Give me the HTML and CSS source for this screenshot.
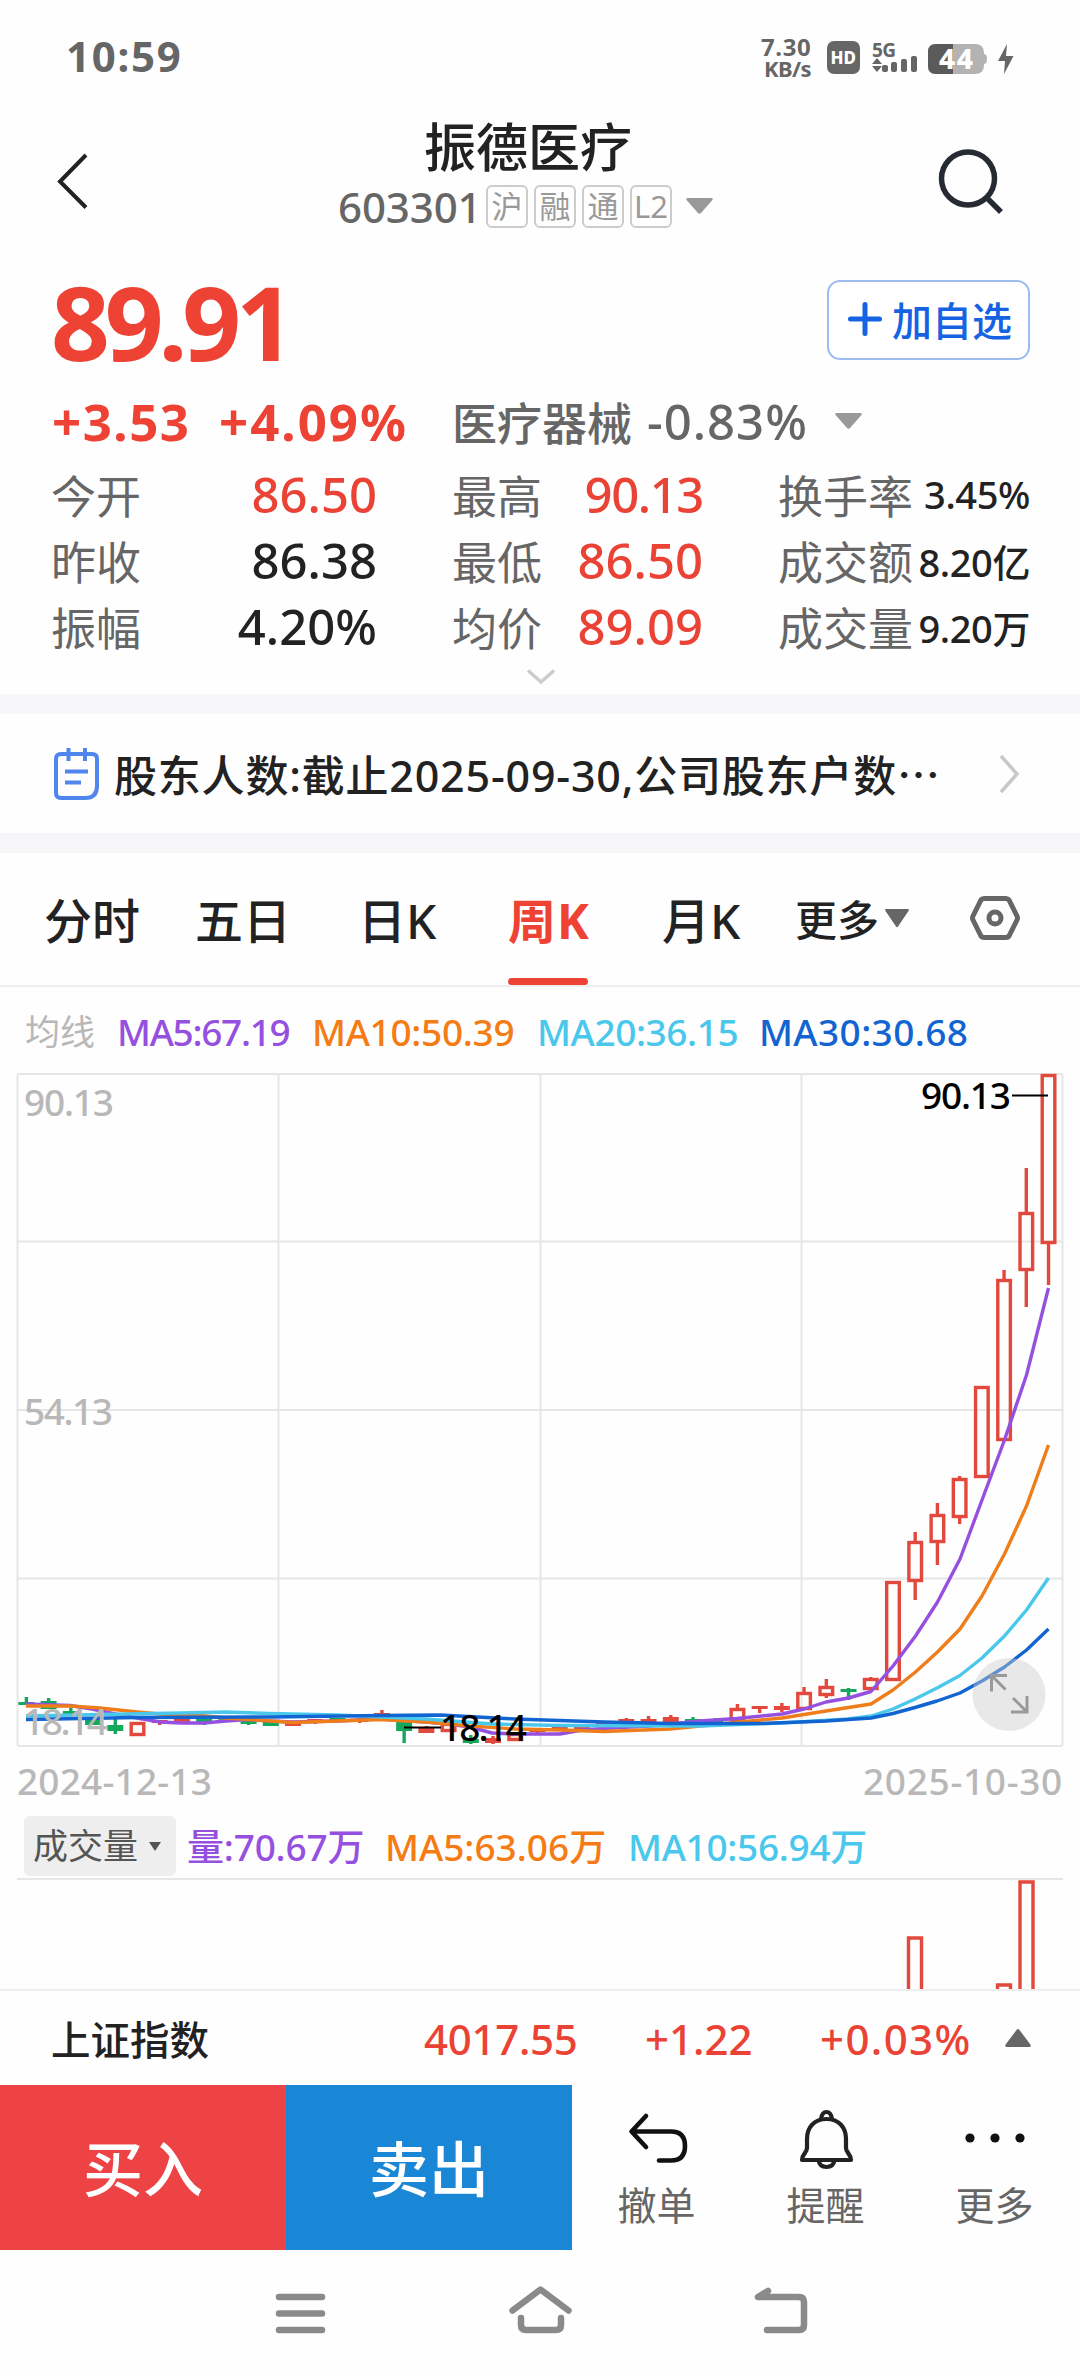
FILE: index.html
```html
<!DOCTYPE html>
<html lang="zh-CN">
<head>
<meta charset="utf-8">
<title>振德医疗 603301</title>
<link rel="stylesheet" href="styles.css">
</head>
<body>
<div class="screen">
  <div class="status">
    <span class="clock">10:59</span>
    <div class="speed"><span>7.30</span><span class="unit">KB/s</span></div>
    <svg class="status-icons" width="200" height="50" viewBox="820 34 200 50">
      <rect x="827" y="41" width="33" height="33" rx="7" fill="#666"/>
      <text class="hd" x="830.5" y="64">HD</text>
      <text class="fiveg" x="872" y="56.500" textLength="24">5G</text>
      <g fill="#666"><path d="M872 64l5-6 5 6zM872 66l5 6 5-6z"/><rect x="882" y="65" width="6" height="7" rx="2"/><rect x="891" y="62" width="6" height="10" rx="2"/><rect x="901" y="59" width="6" height="13" rx="2"/><rect x="911" y="56" width="6" height="16" rx="2"/></g>
      <path d="M936 44h39q9 0 9 9v1q3 0 3 5t-3 5v1q0 9-9 9h-39q-8 0-8-8v-14q0-8 8-8z" fill="#b3b3b3"/>
      <path d="M936 44h17v30h-17q-8 0-8-8v-14q0-8 8-8z" fill="#5a5a5a"/>
      <text class="batt" x="939" y="69" textLength="34">44</text>
      <path d="M1007 44l-9 17h7l-1 13 9.500-18h-7.500z" fill="#666"/>
    </svg>
  </div>

  <header class="header">
    <svg class="back" width="40" height="60" viewBox="0 0 40 60"><path d="M34 4L8 30.500l26 26" fill="none" stroke="#222" stroke-width="4"/></svg>
    <div class="heading">
      <h1>振德医疗</h1>
      <div class="code-row">
        <span class="code">603301</span>
        <span class="tag">沪</span><span class="tag">融</span><span class="tag">通</span><span class="tag">L2</span>
        <svg class="code-arrow" width="27" height="16"><path d="M2 0h23q3 0 1 2.500L15 15q-1.500 1.500-3 0L1 2.500Q-1 0 2 0z" fill="#999"/></svg>
      </div>
    </div>
    <svg class="search" width="70" height="70" viewBox="935 145 70 70"><circle cx="968" cy="178.500" r="26.500" fill="none" stroke="#262a33" stroke-width="5.500"/><path d="M987 198l14 14" stroke="#262a33" stroke-width="5.500"/></svg>
  </header>

  <section class="quote">
    <div class="price-row">
      <span class="price">89.91</span>
      <button class="add"><svg width="34" height="34"><path d="M17 2.500v29M2.500 17h29" stroke="#1562e2" stroke-width="5" stroke-linecap="round"/></svg><span>加自选</span></button>
    </div>
    <div class="change-row">
      <span class="chg">+3.53</span><span class="pct">+4.09%</span><span class="sector">医疗器械</span><span class="sector-pct">-0.83%</span>
      <svg class="sector-arrow" width="27" height="16"><path d="M2 0h23q3 0 1 2.500L15 15q-1.500 1.500-3 0L1 2.500Q-1 0 2 0z" fill="#999"/></svg>
    </div>
    <div class="stats">
      <div class="stat"><span>今开</span><b class="up">86.50</b></div>
      <div class="stat"><span>最高</span><b class="up one">90.13</b></div>
      <div class="stat small"><span>换手率</span><b>3.45%</b></div>
      <div class="stat"><span>昨收</span><b>86.38</b></div>
      <div class="stat"><span>最低</span><b class="up">86.50</b></div>
      <div class="stat small"><span>成交额</span><b>8.20亿</b></div>
      <div class="stat"><span>振幅</span><b>4.20%</b></div>
      <div class="stat"><span>均价</span><b class="up">89.09</b></div>
      <div class="stat small"><span>成交量</span><b>9.20万</b></div>
    </div>
    <svg class="expand" width="30" height="18"><path d="M2 2.500L15 14 28 2.500" fill="none" stroke="#ccc" stroke-width="3.500"/></svg>
  </section>

  <section class="news">
    <svg width="48" height="54" viewBox="52 746 48 54"><g fill="none" stroke="#4f86ee" stroke-width="4"><path d="M61 753h31q5 0 5 5v27q0 12-12 12H61q-5 0-5-5v-34q0-5 5-5z"/><path d="M68.500 747v13M85 747v13"/><path d="M65 770.500h23M65 781.500h16"/></g></svg>
    <span class="news-text">股东人数:截止2025-09-30,公司股东户数⋯</span>
    <svg width="24" height="42"><path d="M3 3l16 18L3 39" fill="none" stroke="#c8c8c8" stroke-width="3.500"/></svg>
  </section>

  <nav class="tabs">
    <span>分时</span><span>五日</span><span>日K</span><span class="active">周K</span><span>月K</span>
    <span class="more">更多<svg width="24" height="19"><path d="M1 0h22q1.500 0 .5 2L13 17.500q-1 1.500-2 0L.5 2Q-.5 0 1 0z" fill="#666"/></svg></span>
    <svg class="gear" width="52" height="48" viewBox="967 894 52 48"><path d="M982 898.500h22q2 0 3 1.500l8 16q1 2 0 4l-8 16q-1 1.500-3 1.500h-22q-2 0-3-1.500l-8-16q-1-2 0-4l8-16q1-1.500 3-1.500z" fill="none" stroke="#666" stroke-width="5"/><circle cx="993" cy="918" r="6" fill="none" stroke="#666" stroke-width="5"/></svg>
  </nav>

  <div class="legend">
    <span class="name">均线</span><span class="violet">MA5:67.19</span><span class="orange">MA10:50.39</span><span class="cyan">MA20:36.15</span><span class="blue">MA30:30.68</span>
  </div>

  <svg class="chart" width="1080" height="676" viewBox="0 1073 1080 676">
    <g fill="none" stroke="#e6e6e6" stroke-width="2">
      <rect x="17.500" y="1074" width="1045" height="672" rx="2"/>
      <path d="M278.500 1074v672M540.500 1074v672M801.500 1074v672M18 1241.500h1044M18 1410h1044M18 1578.500h1044"/>
    </g>
    <g id="candles"></g>
    <g fill="none" stroke-width="3.400" stroke-linejoin="round">
      <polyline stroke="#9650e0" points="26,1704 70,1705.500 92,1709 115,1714 137,1718 160,1722 181,1723 204,1723 226,1721 248,1719.500 270,1721 293,1722 337,1721 380,1719 426,1722 448,1724 470,1727 492,1733 515,1734 560,1734 582,1730 610,1728 650,1726 700,1721 737,1718.500 782,1714 804,1709 826,1702 848.500,1698 871,1691.500 893,1666 915.500,1636 937.500,1602 960,1559 982,1500 1004.500,1440 1026.500,1375 1048.500,1288"/>
      <polyline stroke="#ee7d1a" points="26,1706 70,1706 100,1708 137,1712 160,1714 200,1715.500 226,1718 270,1721 293,1722.500 337,1721 380,1719.500 426,1722 470,1726 515,1729 560,1730 604,1731.500 670,1729 720,1724 740,1722 782,1718 826,1711 871,1704 893,1690 915.500,1672 937.500,1652 960,1629 982,1596 1004.500,1554 1026.500,1506 1048.500,1445"/>
      <polyline stroke="#49c8ec" points="26,1716 100,1714.500 181,1713 226,1712 270,1713.500 337,1715 426,1719 492,1724 560,1725.500 700,1726 782,1723 848,1719 871,1716 893,1709 915,1699 937,1688 960,1675.500 982,1658 1004.500,1636 1026.500,1610 1048.500,1578"/>
      <polyline stroke="#1264d1" points="26,1719.500 137,1717.500 270,1717 380,1715.500 440,1715 515,1719 604,1722 670,1723.500 760,1723.500 826,1721 871,1718 893,1713.500 915,1707.500 937,1701 960,1693 982,1681 1004.500,1667 1026.500,1650 1048.500,1629"/>
    </g>
    <g class="axis"><text x="24" y="1116" textLength="90">90.13</text><text x="24" y="1425" textLength="89">54.13</text><text x="23" y="1734.500" textLength="85">18.14</text></g>
    <g class="mark"><text x="921" y="1109" textLength="90">90.13</text><text x="440" y="1741" textLength="87">18.14</text></g>
    <path d="M1012 1095.500h36M404 1727.500h37" stroke="#000" stroke-width="1.800"/>
    <circle cx="1009" cy="1694.500" r="36.500" fill="#ccc" fill-opacity=".43"/>
    <path d="M1007 1675.500h-15.500v16M991.500 1675.500l14 14M1027 1696v16h-16M1027 1712l-14-14" fill="none" stroke="#999" stroke-width="3"/>
  </svg>

  <div class="dates"><span class="start">2024-12-13</span><span class="end">2025-10-30</span></div>

  <div class="vol-legend">
    <span class="vol-btn">成交量<svg width="12" height="9"><path d="M0 0h12L6 9z" fill="#555"/></svg></span>
    <span class="violet">量:70.67万</span><span class="orange">MA5:63.06万</span><span class="cyan">MA10:56.94万</span>
  </div>
  <svg class="volume" width="1080" height="111" viewBox="0 1878 1080 111">
    <path d="M17 1879h1046" stroke="#e6e6e6" stroke-width="2"/>
    <path d="M908.500 1992v-54h13v54M997.500 1992v-7h13v7M1020 1992v-110h13v110" fill="none" stroke="#e2483b" stroke-width="3.400"/>
  </svg>

  <div class="index">
    <span class="index-name">上证指数</span><span class="index-value">4017.55</span><span>+1.22</span><span class="index-pct">+0.03%</span>
    <svg width="26" height="18"><path d="M11.500 1q1.500-2 3 0L25 15q2 3-1 3H2q-3 0-1-3z" fill="#666"/></svg>
  </div>

  <div class="trade">
    <div class="buy">买入</div><div class="sell">卖出</div>
    <div class="action">
      <svg width="64" height="64" viewBox="624 2106 64 64"><path d="M645 2116l-14.500 15.500 14.500 15.500M631 2131.500h39q14 0 14 14.500t-14 14.500h-12" fill="none" stroke="#111" stroke-width="4.600" stroke-linecap="round" stroke-linejoin="round"/></svg><span>撤单</span></div>
    <div class="action">
      <svg width="64" height="64" viewBox="792 2106 64 64"><g fill="none" stroke="#222" stroke-width="4.200" stroke-linejoin="round"><path d="M824.500 2119c-12 0-19.500 8-19.500 20v9c0 5-5 6-5 12h49c0-6-5-7-5-12v-9c0-12-7.500-20-19.500-20z"/><path d="M819 2119q1-7 5.500-7t5.500 7M816.500 2160q1 7 8 7t8-7"/></g></svg><span>提醒</span></div>
    <div class="action">
      <svg width="64" height="64" viewBox="962 2106 64 64"><g fill="#111"><circle cx="969" cy="2138" r="4.600"/><circle cx="994" cy="2138" r="4.600"/><circle cx="1019" cy="2138" r="4.600"/></g></svg><span>更多</span></div>
  </div>

  <svg class="sysnav" width="1080" height="126" viewBox="0 2250 1080 126">
    <g fill="none" stroke="#8a8a8a" stroke-width="6.500" stroke-linecap="round" stroke-linejoin="round">
      <path d="M279 2297h43M279 2313.500h43M279 2330h43"/>
      <path d="M512.500 2310.500l28-21 28 21M521 2318v7q0 5 5 5h30q5 0 5-5v-7"/>
      <path d="M768 2291l-10 6h41q5 0 5 5v23q0 5-5 5h-32"/>
    </g>
  </svg>
</div>
<script src="chart.js"></script>
</body>
</html>
```
FILE: styles.css
```css
* { box-sizing: border-box; }
body { margin: 0; background: #fdfdfd; color: #222; font-family: "Noto Sans", "Noto Sans CJK SC", sans-serif; font-weight: 500; }
svg { display: block; flex: none; }
.screen { width: 1080px; height: 2376px; display: flex; flex-direction: column; overflow: hidden; white-space: nowrap; background: #fefefe; }

.status { height: 114px; display: flex; align-items: flex-start; padding-left: 66px; color: #666; font-weight: 700; }
.clock { width: 695px; font-size: 42px; line-height: 60px; margin-top: 26px; letter-spacing: 1.7px; }
.speed { display: flex; flex-direction: column; width: 59px; padding-top: 35px; font-size: 24px; line-height: 23px; letter-spacing: .6px; }
.speed .unit { font-size: 22px; line-height: 21px; padding-left: 3px; letter-spacing: -.6px; }
.status-icons { margin-top: 34px; }
.status text { font-weight: 800; fill: #fff; }
.status .hd { font-size: 17px; }
.status .fiveg { font-size: 19px; fill: #666; font-weight: 700; }
.status .batt { font-size: 28px; }

.header { height: 151px; display: grid; grid-template-columns: 52px 286px 592px 1fr; }
.back { grid-column: 1; margin: 37px 0 0 52px; }
.heading { grid-column: 3; }
h1 { margin: 0 0 0 86px; font-size: 52px; line-height: 66px; font-weight: 500; }
.code-row { display: flex; gap: 6px; margin-top: 5px; height: 43px; align-items: center; }
.code { width: 142px; font-size: 42px; line-height: 43px; color: #666; letter-spacing: -.1px; }
.tag { width: 42px; height: 43px; border: 2px solid #ccc; border-radius: 6px; text-align: center; font-size: 31px; line-height: 39px; color: #999; font-weight: 400; }
.code-arrow { margin-left: 8px; margin-bottom: 2px; }
.search { grid-column: 4; margin: 31px 0 0 5px; }

.quote { height: 429px; padding: 0 50px 0 52px; }
.price-row { height: 124px; display: flex; justify-content: space-between; align-items: flex-start; }
.price { margin-left: -1px; font-size: 103px; line-height: 112px; font-weight: 700; color: #ed4234; letter-spacing: -5.2px; }
.add { width: 203px; height: 80px; margin-top: 15px; padding: 0 0 3px 19px; border: 2px solid #9dbcf0; border-radius: 13px; background: #fff; color: #1562e2; font: inherit; font-size: 40px; display: flex; align-items: center; gap: 10px; }
.change-row { height: 64px; display: flex; align-items: center; }
.chg { width: 167px; font-size: 51px; font-weight: 700; color: #ed4234; letter-spacing: 1.5px; }
.pct { width: 233px; font-size: 51px; font-weight: 700; color: #ed4234; letter-spacing: 2px; }
.sector { width: 195px; font-size: 45px; color: #666; font-weight: 450; }
.sector-pct { width: 188px; font-size: 49px; color: #666; letter-spacing: 1px; }
.stats { margin-top: 8px; display: grid; grid-template-columns: 325px 326px 327px; grid-auto-rows: 66px; }
.stat { display: flex; justify-content: space-between; align-items: center; font-size: 45px; }
.stat:nth-child(3n+2) { padding-left: 76px; }
.stat:nth-child(3n) { padding-left: 76px; }
.stat span { margin-left: -1px; color: #666; font-weight: 400; }
.stat b { font-size: 49px; font-weight: 500; }
.stat .one { letter-spacing: -1.4px; }
.stat.small b { font-size: 38px; letter-spacing: -.4px; }
.up { color: #ea4335; }
.expand { margin: 9px auto 0; }

.news { height: 159px; border: solid #f6f6f8; border-width: 20px 0; display: flex; align-items: center; padding: 0 50px 0 52px; }
.news-text { width: 898px; padding-left: 14px; font-size: 43px; letter-spacing: .8px; }

.tabs { height: 134px; border-bottom: 2px solid #eee; display: grid; grid-template-columns: 151px 163px 150px 154px 133px 174px 1fr; padding-left: 44px; font-size: 48px; line-height: 136px; }
.tabs .active { color: #ed4234; font-weight: 700; letter-spacing: 1px; }
.active::after { content: ""; display: block; width: 80px; height: 7px; border-radius: 4px; background: #ed4234; margin-top: -11px; }
.tabs .more { display: flex; align-items: center; gap: 6px; font-size: 42px; height: 134px; }
.more svg { margin-bottom: 4px; }
.gear { margin-top: 41px; }

.legend { height: 86px; display: grid; grid-template-columns: 92px 195px 225px 222px 1fr; padding: 4px 0 0 25px; font-size: 37px; line-height: 82px; }
.legend .name { font-size: 35px; font-weight: 400; color: #b8b8b8; }
.legend .violet { letter-spacing: -1.3px; }
.legend .orange { letter-spacing: -.3px; }
.legend .cyan { letter-spacing: -.4px; }
.legend .blue { letter-spacing: .4px; }
.violet { color: #9650e0; } .orange { color: #f57c14; } .cyan { color: #49c8ec; } .blue { color: #1264d1; }
.axis text { font-size: 37px; fill: #b8b8b8; }
.mark text { font-size: 37px; fill: #000; }

.dates { height: 64px; display: flex; justify-content: space-between; padding: 0 17px 0 17px; font-size: 37px; line-height: 64px; color: #b8b8b8; }
.start { letter-spacing: .2px; }
.end { letter-spacing: .7px; }
.vol-legend { height: 65px; padding: 3px 0 0 24px; display: grid; grid-template-columns: 163px 198px 243px 1fr; font-size: 37px; line-height: 62px; }
.vol-legend .violet { letter-spacing: -.2px; }
.vol-legend .cyan { letter-spacing: -.3px; }
.vol-btn { width: 152px; height: 60px; background: #eee; border-radius: 6px; padding-left: 9px; display: flex; align-items: center; gap: 11px; color: #555; font-size: 35px; font-weight: 400; }

.index { height: 96px; border-top: 2px solid #eee; display: grid; grid-template-columns: 373px 221px 175px 185px 1fr; align-items: center; padding-left: 51px; font-size: 42px; color: #ea4335; }
.index-name { font-size: 39.5px; color: #222; }
.index-value { letter-spacing: -.3px; }
.index-pct { letter-spacing: 1.4px; }
.trade { height: 165px; display: grid; grid-template-columns: 286px 286px 169px 169px 169px; grid-template-rows: 165px; }
.buy, .sell { color: #fff; font-size: 60px; line-height: 169px; text-align: center; overflow: hidden; }
.buy { background: #ee4345; } .sell { background: #1a86d6; }
.action { display: flex; flex-direction: column; align-items: center; padding-top: 21px; font-size: 39px; line-height: 69px; color: #666; font-weight: 400; }
```
FILE: chart.js
```js
// Weekly candles, oldest first: [body top, body bottom, wick top, wick bottom, colour]
const R = "#e2483b", G = "#14a85d";
const candles = [
  [1702,1705,1697,1705,G],[1701,1709,1698,1709,G],[1711,1715,1708,1715,G],[1718,1725,1718,1725,G],
  [1725,1731,1719,1734,G],[1722,1736,1722,1736,R],[1720,1723,1720,1725,R],[1718,1722,1718,1722,R],
  [1719,1722,1717,1725,G],[1718,1720,1718,1721,G],[1721,1724,1719,1725,G],[1722,1726,1722,1726,G],
  [1722,1726,1722,1726,R],[1719,1723,1719,1724,R],[1718,1720,1718,1720,G],[1719,1722,1718,1723,R],
  [1713,1716,1710,1716,R],[1722,1731,1722,1743,G],[1728,1733,1726,1733,R],[1723,1732,1723,1732,R],
  [1739,1743,1735,1744,G],[1738,1743,1736,1744,R],[1733,1741,1733,1741,R],[1729,1732,1729,1733,R],
  [1727,1730,1727,1731,R],[1726,1729,1726,1729,R],[1722,1726,1722,1726,R],[1719,1723,1718,1723,R],
  [1719,1722,1716,1722,R],[1717,1722,1715,1722,R],[1719,1722,1717,1723,G],[1719,1722,1718,1723,G],
  [1708,1721,1704,1721,R],[1706,1709,1706,1713,R],[1706,1710,1703,1712,R],[1692,1710,1687,1710,R],
  [1686,1696,1679,1698,R],[1689,1692,1688,1700,G],[1678,1690,1677,1690,R],[1581,1681,1581,1681,R],
  [1541,1582,1532,1600,R],[1514,1543,1503,1565,R],[1478,1518,1476,1524,R],[1386,1478,1386,1478,R],
  [1279,1441,1270,1441,R],[1212,1271,1168,1307,R],[1074,1244,1074,1285,R]
];
document.getElementById("candles").innerHTML = candles.map(([top, bottom, high, low, color], i) => {
  const x = 26.4 + i * 22.22;
  const hollow = color === R && bottom - top >= 8;
  const body = hollow
    ? `<rect x="${x - 6.3}" y="${top + 1.5}" width="12.6" height="${bottom - top - 3}" fill="none" stroke="${color}" stroke-width="3.4"/>`
    : `<rect x="${x - 8}" y="${top}" width="16" height="${bottom - top}" fill="${color}"/>`;
  return `${body}<path d="M${x} ${high}V${top}M${x} ${bottom}V${low}" stroke="${color}" stroke-width="3.4"/>`;
}).join("");
```
